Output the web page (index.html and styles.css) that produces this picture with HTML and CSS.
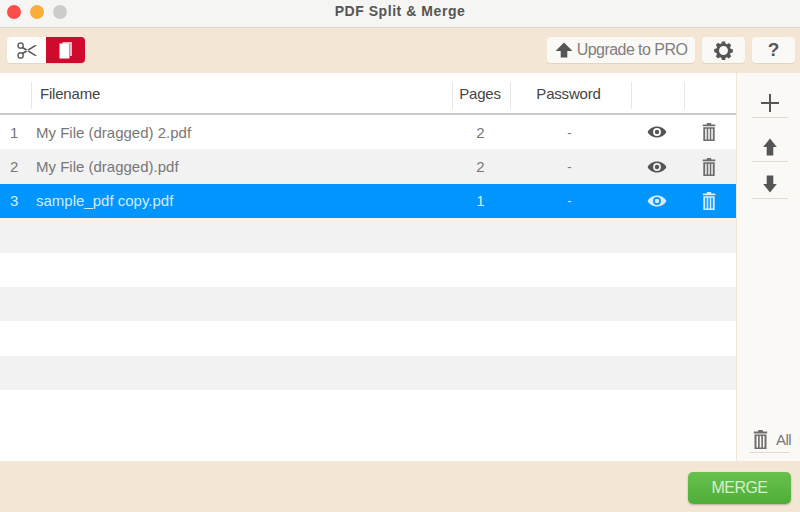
FILE: index.html
```html
<!DOCTYPE html>
<html lang="en">
<head>
<meta charset="utf-8">
<title>PDF Split &amp; Merge</title>
<link rel="stylesheet" href="styles.css">
</head>
<body>
<svg class="defs" width="0" height="0" aria-hidden="true">
  <defs>
    <symbol id="eye" viewBox="0 0 20 14"><path fill="currentColor" fill-rule="evenodd" d="M10 1.500C5.600 1.500 2.200 3.900.6 7c1.600 3.100 5 5.500 9.400 5.500s7.800-2.400 9.400-5.500C17.800 3.900 14.400 1.500 10 1.500zm0 1.600a3.900 3.900 0 1 1 0 7.800 3.900 3.900 0 0 1 0-7.800z"/><circle fill="currentColor" cx="10" cy="7" r="2.200"/></symbol>
    <symbol id="trash" viewBox="0 0 14 18"><path fill="currentColor" fill-rule="evenodd" d="M5 0h4l.4 1.500h3.900v1.700H.7V1.500h3.900zM1.300 4.200h11.400V18H1.300zM3.200 5.700v10.800h1.500V5.700zM6.250 5.700v10.800h1.500V5.700zM9.300 5.700v10.800h1.500V5.700z"/></symbol>
  </defs>
</svg>
<div class="window">
  <header class="titlebar">
    <div class="lights"><span class="light red"></span><span class="light amber"></span><span class="light grey"></span></div>
    <div class="title">PDF Split &amp; Merge</div>
  </header>
  <div class="toolbar">
    <div class="segment">
      <button class="seg seg-off" aria-label="Split">
        <svg width="20" height="17" viewBox="0 0 20 17"><g fill="none" stroke="#666" stroke-width="1.500"><circle cx="3.600" cy="3.600" r="2.600"/><circle cx="3.600" cy="13.400" r="2.600"/></g><path fill="#555" d="M5.500 4.400 19.800 13.400 18 14 5 6.200zM5.500 12.600 19.800 3.600 18 3 5 10.800z"/></svg>
      </button>
      <button class="seg seg-on" aria-label="Merge">
        <svg width="14" height="17" viewBox="0 0 14 17"><path fill="#f0b9c2" d="M3.500 0h9.500v14h-2V2H3.500z"/><path fill="#fff" d="M.5 1.500h10V16.500H.500z"/></svg>
      </button>
    </div>
    <div class="tools">
      <button class="tool upgrade">
        <svg width="18" height="16" viewBox="0 0 18 16"><path fill="#555" d="M9 .5 17.500 9H12.300v6.500H5.700V9H.5z"/></svg>
        <span>Upgrade to PRO</span>
      </button>
      <button class="tool square" aria-label="Settings">
        <svg width="19" height="19" viewBox="0 0 20 20"><path fill="#555" fill-rule="evenodd" d="M8.300 .5h3.400l.5 2.400 1.500.6 2-1.300 2.400 2.400-1.300 2 .6 1.500 2.400.5v3.400l-2.400.5-.6 1.500 1.300 2-2.400 2.400-2-1.300-1.500.6-.5 2.400H8.300l-.5-2.400-1.500-.6-2 1.300-2.400-2.400 1.300-2-.6-1.500L.2 11.700V8.300l2.400-.5.6-1.500-1.300-2 2.400-2.400 2 1.300 1.500-.6zM10 5.300a4.700 4.700 0 1 0 0 9.400 4.700 4.700 0 0 0 0-9.400z"/></svg>
      </button>
      <button class="tool square help">?</button>
    </div>
  </div>
  <main class="content">
    <section class="table">
      <div class="row head">
        <div class="c num"></div>
        <div class="c name">Filename</div>
        <div class="c pages">Pages</div>
        <div class="c pass">Password</div>
        <div class="c view"></div>
        <div class="c del"></div>
      </div>
      <div class="row body">
        <div class="c num">1</div><div class="c name">My File (dragged) 2.pdf</div><div class="c pages">2</div><div class="c pass">-</div>
        <div class="c view"><svg class="eye"><use href="#eye"/></svg></div><div class="c del"><svg class="trash"><use href="#trash"/></svg></div>
      </div>
      <div class="row body alt">
        <div class="c num">2</div><div class="c name">My File (dragged).pdf</div><div class="c pages">2</div><div class="c pass">-</div>
        <div class="c view"><svg class="eye"><use href="#eye"/></svg></div><div class="c del"><svg class="trash"><use href="#trash"/></svg></div>
      </div>
      <div class="row body selected">
        <div class="c num">3</div><div class="c name">sample_pdf copy.pdf</div><div class="c pages">1</div><div class="c pass">-</div>
        <div class="c view"><svg class="eye"><use href="#eye"/></svg></div><div class="c del"><svg class="trash"><use href="#trash"/></svg></div>
      </div>
      <div class="row body alt"></div>
      <div class="row body"></div>
      <div class="row body alt"></div>
      <div class="row body"></div>
      <div class="row body alt"></div>
    </section>
    <aside class="side">
      <button class="side-btn plus" aria-label="Add"><svg width="18" height="18" viewBox="0 0 18 18"><path fill="#555" d="M8 0h2v8h8v2H10v8H8V10H0V8h8z"/></svg></button>
      <button class="side-btn up" aria-label="Move up"><svg width="14" height="18" viewBox="0 0 14 18"><path fill="#555" d="M7 .5 13.800 9H10.300v8.500H3.700V9H.2z"/></svg></button>
      <button class="side-btn down" aria-label="Move down"><svg width="14" height="18" viewBox="0 0 14 18"><path fill="#555" d="M7 17.500.2 9H3.700V.5h6.600V9h3.500z"/></svg></button>
      <button class="side-btn all"><svg class="trash"><use href="#trash"/></svg><span>All</span></button>
    </aside>
  </main>
  <footer class="footer"><button class="merge">MERGE</button></footer>
</div>
</body>
</html>
```
FILE: styles.css
```css
* { box-sizing: border-box; }
html, body { margin: 0; padding: 0; }
body { width: 800px; height: 512px; overflow: hidden; font-family: "Liberation Sans", Arial, sans-serif; color: #555; }
button { font: inherit; border: 0; padding: 0; margin: 0; background: none; color: inherit; }
.defs { position: absolute; }
.window { display: flex; flex-direction: column; width: 800px; height: 512px; }

.titlebar { flex: 0 0 28px; display: flex; align-items: center; position: relative; background: #f5f5f4; border-bottom: 1px solid #dbd6cf; padding-bottom: 4px; }
.lights { display: flex; gap: 9px; padding-left: 7px; }
.light { width: 14px; height: 14px; border-radius: 50%; }
.red { background: #fb4e4b; }
.amber { background: #f9ae3b; }
.grey { background: #cdcccb; }
.title { position: absolute; left: 0; right: 0; top: 3px; text-align: center; font-size: 14px; font-weight: 700; line-height: 16px; color: #555; letter-spacing: .55px; }

.toolbar { flex: 0 0 45px; display: flex; justify-content: space-between; align-items: flex-start; padding: 9px 5px 0 7px; background: #f3e6d5; }
.segment { display: flex; height: 26px; border-radius: 4px; overflow: hidden; box-shadow: 0 1px 1px rgba(0,0,0,.08); }
.seg { width: 39px; display: flex; align-items: center; justify-content: center; }
.seg-off { background: #fff; }
.seg-on { background: #cf0a2c; }
.tools { display: flex; gap: 7px; }
.tool { height: 26px; display: flex; align-items: center; justify-content: center; background: #fbf9f6; border-radius: 4px; box-shadow: 0 1px 1px rgba(0,0,0,.08); }
.upgrade { width: 148px; gap: 4px; font-size: 16px; color: #808080; letter-spacing: -.55px; }
.square { width: 43px; }
.help { font-size: 19px; font-weight: 700; color: #555; }

.content { flex: 1; display: flex; min-height: 0; }
.table { flex: 0 0 736px; display: flex; flex-direction: column; background: #fff; }
.row { display: flex; align-items: center; }
.head { flex: 0 0 42px; height: 42px; align-items: flex-end; padding-bottom: 4px; border-bottom: 2px solid #c9c9c9; font-size: 15px; letter-spacing: -.2px; color: #444; }
.head .c { height: 27px; padding-bottom: 5px; display: flex; align-items: center; justify-content: center; border-left: 1px solid #e6e6e6; }
.head .c.num { border-left: 0; }
.head .c.name { justify-content: flex-start; padding-left: 8px; }
.head .c.pages { padding-right: 3px; }
.head .c.pass { padding-right: 5px; }
.body { flex: 0 0 34.400px; height: 34.400px; font-size: 15px; color: #777; }
.alt { background: #f2f2f2; }
.selected { background: #0095ff; color: #d4ecff; }
.c { flex: none; }
.num { width: 31px; padding-left: 10px; }
.name { width: 421px; padding-left: 5px; }
.pages { width: 58px; text-align: center; padding-right: 1px; }
.pass { width: 121px; text-align: center; padding-right: 2px; }
.view { width: 53px; display: flex; justify-content: center; padding-right: 2px; }
.del { width: 52px; display: flex; justify-content: center; padding-right: 2px; }
.body .pass { font-size: 13px; }
.eye { width: 20px; height: 14px; color: #555; display: block; }
.trash { width: 14px; height: 18px; color: #6e6e6e; display: block; }
.selected .eye, .selected .trash { color: #d4ecff; }

.side { flex: 1; display: flex; flex-direction: column; align-items: center; background: #fbf9f5; border-left: 1px solid #efe6d8; padding: 12px 0 0 3px; }
.side-btn { width: 36px; display: flex; align-items: center; justify-content: center; border-bottom: 1px solid #dedbd5; }
.plus { height: 33px; padding-top: 3px; }
.up { height: 38px; margin-top: 6px; padding-top: 9px; }
.down { height: 37px; padding-top: 8px; }
.all { margin-top: auto; height: 37px; width: 40px; gap: 8px; padding: 10px 0 0 4px; font-size: 15px; letter-spacing: -.5px; color: #777; margin-bottom: 8px; }
.all .trash { flex: none; width: 15px; height: 19px; }

.footer { flex: 0 0 51px; display: flex; justify-content: flex-end; align-items: flex-start; padding: 11px 9px 0 0; background: #f3e6d5; }
.merge { width: 103px; height: 32px; border-radius: 5px; background: linear-gradient(#68c04f, #4eae38); color: #d5efcc; font-size: 16px; letter-spacing: -.55px; box-shadow: 0 1px 2px rgba(0,0,0,.25); }
```
